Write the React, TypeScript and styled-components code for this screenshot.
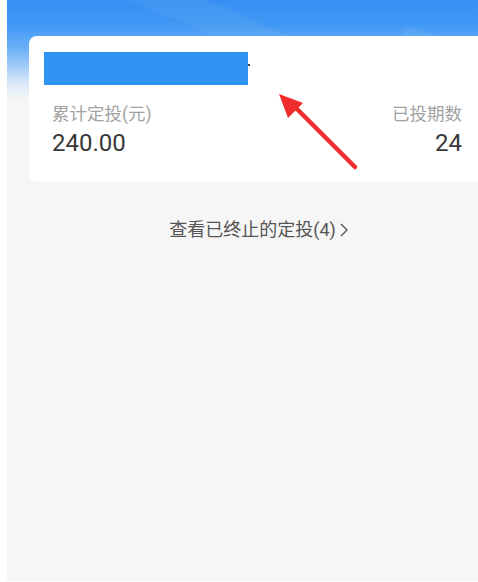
import React from "react";
import styled, { createGlobalStyle } from "styled-components";

const Global = createGlobalStyle`
  html, body { margin: 0; padding: 0; background: #ffffff; }
  body { font-family: Roboto, "Noto Sans CJK SC", "Noto Sans", sans-serif; }
  * { box-sizing: border-box; }
`;

const Frame = styled.div`
  width: 478px;
  height: 582px;
  padding: 0 0 1px 7px;
  background: #ffffff;
`;

const Page = styled.div`
  position: relative;
  height: 581px;
  overflow: hidden;
  background:
    linear-gradient(180deg, #3590f3 0px, #4198f4 25px, #6aaff6 48px, #a9cff7 68px, #dce9f8 84px, #f6f6f6 100px, #f6f6f6 100%);
  padding-top: 36px;
`;

const Waves = styled.svg`
  position: absolute;
  left: 0;
  top: 0;
  width: 471px;
  height: 60px;
  pointer-events: none;
`;

const Card = styled.div`
  position: relative;
  margin-left: 22px;
  width: 459px;
  height: 146px;
  background: #ffffff;
  border-radius: 8px;
  padding: 16px 26px 0 15px;
  display: flex;
  flex-direction: column;
`;

const Masked = styled.div`
  width: 204px;
  height: 33px;
  background: #2f93f4;
`;

const Dot = styled.span`
  position: absolute;
  left: 219px;
  top: 28px;
  width: 2px;
  height: 2px;
  background: #444;
`;

const Stats = styled.div`
  display: flex;
  justify-content: space-between;
  margin-top: 18px;
  padding-left: 8px;
`;

const Stat = styled.div<{ $align: "left" | "right" }>`
  display: flex;
  flex-direction: column;
  align-items: ${(p) => (p.$align === "right" ? "flex-end" : "flex-start")};
`;

const Label = styled.span`
  font-size: 17.5px;
  line-height: 22px;
  color: #a2a2a2;
  font-family: Roboto, "Noto Sans CJK SC", sans-serif;
`;

const Value = styled.span`
  font-size: 24px;
  line-height: 30px;
  margin-top: 3px;
  color: #383838;
  font-family: Roboto, "Noto Sans CJK SC", sans-serif;
`;

const LinkRow = styled.div`
  display: flex;
  justify-content: center;
  align-items: center;
  margin-top: 36px;
  padding-left: 32px;
  gap: 4px;
  color: #555555;
  font-size: 18px;
  line-height: 24px;
  font-family: Roboto, "Noto Sans CJK SC", sans-serif;
`;

const Arrow = styled.svg`
  position: absolute;
  left: 0;
  top: 0;
  width: 471px;
  height: 200px;
  pointer-events: none;
`;

export default function App() {
  return (
    <>
      <Global />
      <Frame>
        <Page>
          <Waves viewBox="0 0 471 60">
            <path d="M120 0 Q200 30 250 60 L330 60 Q260 25 200 0 Z" fill="#ffffff" opacity="0.05" />
            <path d="M380 60 L400 25 L440 40 L440 60 Z" fill="#ffffff" opacity="0.06" />
          </Waves>
          <Card>
            <Masked />
            <Dot />
            <Stats>
              <Stat $align="left">
                <Label>累计定投(元)</Label>
                <Value>240.00</Value>
              </Stat>
              <Stat $align="right">
                <Label>已投期数</Label>
                <Value>24</Value>
              </Stat>
            </Stats>
          </Card>
          <LinkRow>
            <span>查看已终止的定投(4)</span>
            <svg width="8" height="14" viewBox="0 0 8 14">
              <path d="M1 1 L7 7 L1 13" fill="none" stroke="#555" strokeWidth="1.4" />
            </svg>
          </LinkRow>
          <Arrow viewBox="0 0 471 200">
            <line x1="348" y1="167" x2="284" y2="103" stroke="#f02b2b" strokeWidth="4.5" strokeLinecap="round" />
            <polygon points="272,94 281,118 296,103" fill="#f02b2b" />
          </Arrow>
        </Page>
      </Frame>
    </>
  );
}
